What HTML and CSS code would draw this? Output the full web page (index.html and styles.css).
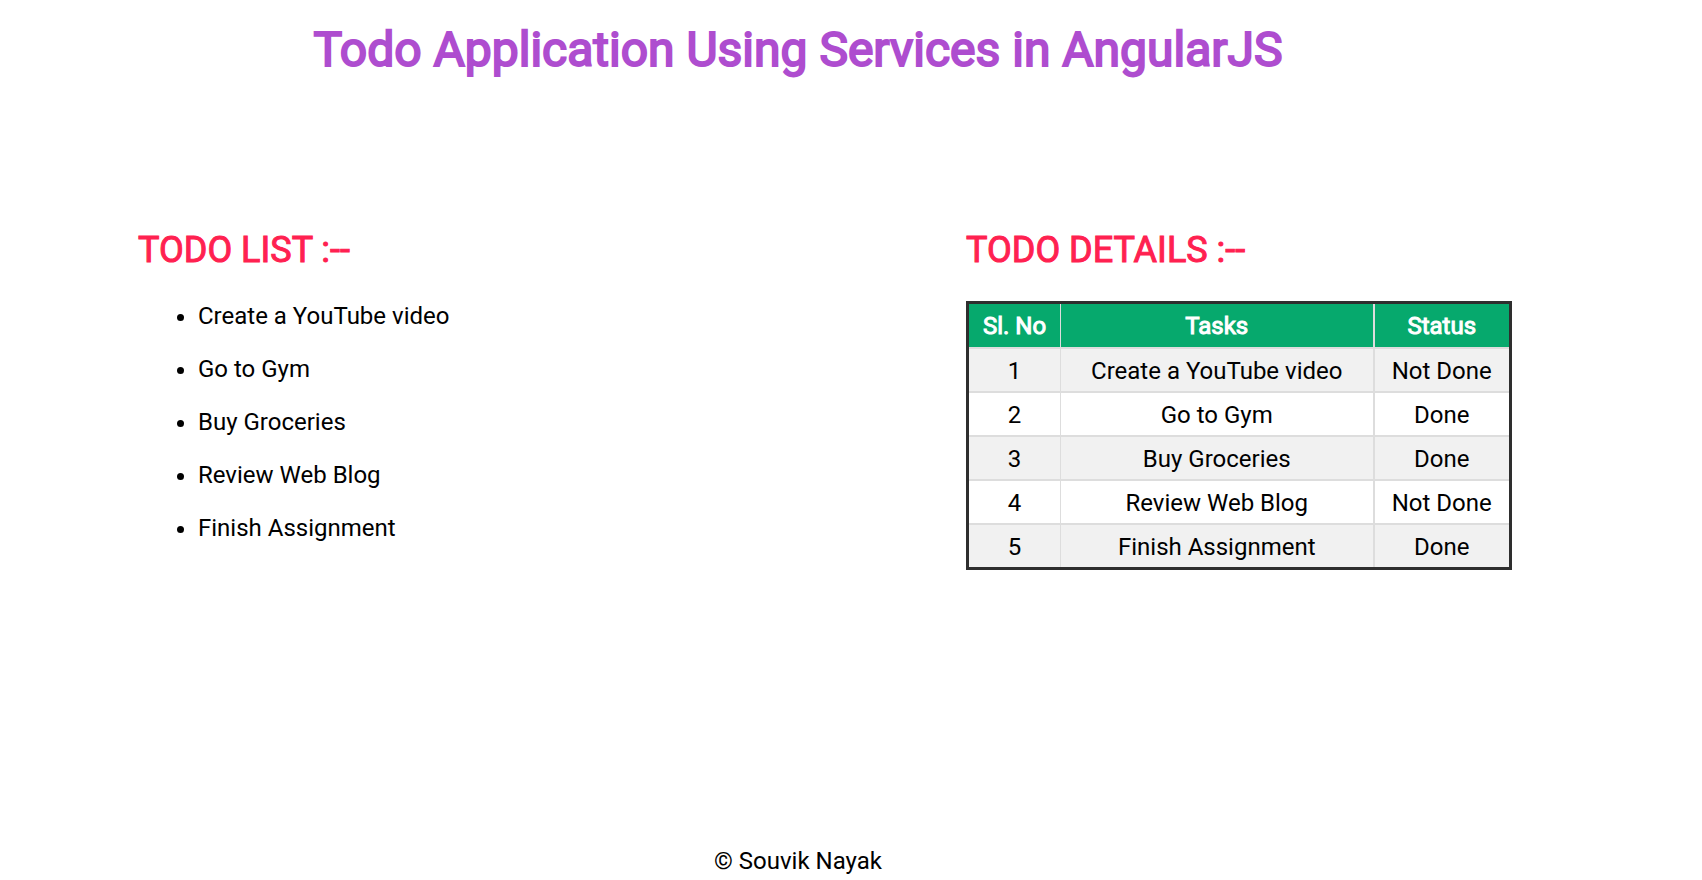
FILE: index.html
```
<!DOCTYPE html>
<html lang="en">
<head>
  <meta charset="utf-8">
  <meta name="viewport" content="width=device-width, initial-scale=1">
  <title>Todo Application</title>
  <link rel="stylesheet" href="styles.css">
</head>
<body>
  <header class="page-header">
    <h1 class="page-title">Todo Application Using Services in AngularJS</h1>
  </header>

  <main class="content">
    <section>
      <h2 class="section-title">TODO LIST :--</h2>
      <ul class="todo-list">
        <li>Create a YouTube video</li>
        <li>Go to Gym</li>
        <li>Buy Groceries</li>
        <li>Review Web Blog</li>
        <li>Finish Assignment</li>
      </ul>
    </section>

    <section>
      <h2 class="section-title">TODO DETAILS :--</h2>
      <table class="todo-table">
        <thead>
          <tr><th class="col-number">Sl. No</th><th>Tasks</th><th class="col-status">Status</th></tr>
        </thead>
        <tbody>
          <tr><td>1</td><td>Create a YouTube video</td><td>Not Done</td></tr>
          <tr><td>2</td><td>Go to Gym</td><td>Done</td></tr>
          <tr><td>3</td><td>Buy Groceries</td><td>Done</td></tr>
          <tr><td>4</td><td>Review Web Blog</td><td>Not Done</td></tr>
          <tr><td>5</td><td>Finish Assignment</td><td>Done</td></tr>
        </tbody>
      </table>
    </section>
  </main>

  <footer class="page-footer">© Souvik Nayak</footer>
</body>
</html>
```

FILE: styles.css
```
* {
  box-sizing: border-box;
}

body {
  display: flex;
  flex-direction: column;
  min-height: 100vh;
  margin: 0;
  background: #fff;
  color: #000;
  font-family: Roboto, "Liberation Sans", sans-serif;
  font-size: 24px;
  line-height: 28px;
}

.page-header,
.page-footer {
  padding-right: 106px;
  text-align: center;
}

.page-header {
  padding-top: 20px;
}

.page-title,
.section-title {
  margin: 0;
  font-weight: 400;
  -webkit-text-stroke: 1px currentColor;
}

.page-title {
  color: #ae4dcf;
  font-size: 48px;
  line-height: 60px;
  -webkit-text-stroke-width: 2px;
}

.content {
  display: grid;
  flex: 1;
  grid-template-columns: 9fr 8fr;
  padding: 148px 0 0 138px;
}

.section-title {
  color: #ff2150;
  font-size: 36px;
  line-height: 44px;
}

.todo-list {
  margin: 30px 0 0;
  padding-left: 60px;
}

.todo-list li {
  margin-bottom: 25px;
}

.todo-table {
  width: 546px;
  max-width: 100%;
  margin-top: 29px;
  border: 3px solid #2e2e2e;
  border-collapse: collapse;
  text-align: center;
}

.todo-table th,
.todo-table td {
  height: 44px;
  padding: 2px 0 0;
  border: 2px solid #ddd;
}

.todo-table thead th {
  height: 45px;
  border-top: 3px solid #2e2e2e;
  background: #06a96d;
  color: #fff;
  font-weight: 400;
  -webkit-text-stroke: 1px currentColor;
}

.todo-table tr > :first-child {
  border-left: 3px solid #2e2e2e;
  border-right-width: 1px;
}

.todo-table tr > :nth-child(2) {
  border-left-width: 1px;
}

.todo-table tr > :last-child {
  border-right: 3px solid #2e2e2e;
}

.todo-table tbody tr:last-child td {
  height: 45px;
  border-bottom: 3px solid #2e2e2e;
}

.todo-table tbody tr:nth-child(odd) {
  background: #f1f1f1;
}

.col-number {
  width: 93px;
}

.col-status {
  width: 137px;
}

.page-footer {
  padding-bottom: 5px;
}
```
